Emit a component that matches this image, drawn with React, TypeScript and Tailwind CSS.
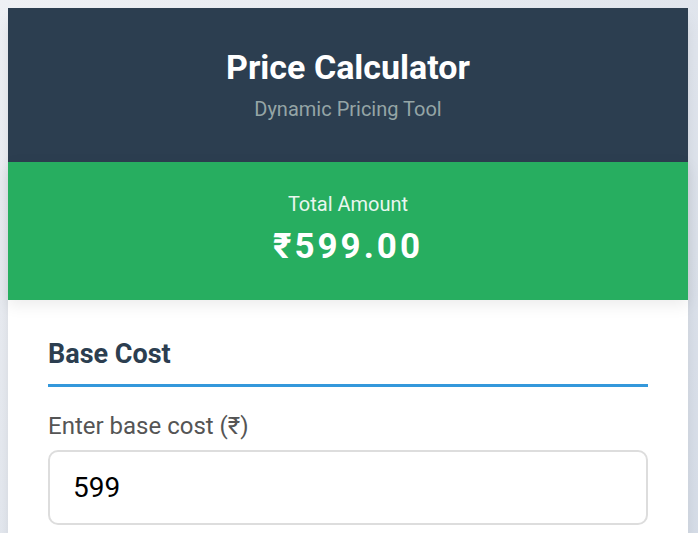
import { useState } from 'react';

export default function App() {
    const [baseCost, setBaseCost] = useState('599');
    const total = (parseFloat(baseCost) || 0).toFixed(2);

    return (
        <div className="min-h-screen bg-[linear-gradient(135deg,#eef0f4_0%,#d0d8e4_100%)] pt-2 pl-2 pr-[10px] pb-2 font-['Roboto','Liberation_Sans',sans-serif]">
            <div className="bg-white shadow-lg">
                {/* Header */}
                <div className="bg-[#2c3e50] px-10 pt-10 pb-[39px] text-center">
                    <h1 className="text-[34px] leading-[38px] font-bold text-white">Price Calculator</h1>
                    <p className="mt-[10px] text-[20px] leading-[27px] text-[#95a5a6]">Dynamic Pricing Tool</p>
                </div>

                {/* Total */}
                <div className="relative z-10 bg-[#27ae60] pt-[30px] pb-[31px] text-center text-white shadow-[0_5px_15px_rgba(0,0,0,0.08)]">
                    <div className="text-[20px] leading-[24px] opacity-90">Total Amount</div>
                    <div className="mt-[9px] text-[35px] leading-[44px] font-bold tracking-[3px]">₹{total}</div>
                </div>

                {/* Content */}
                <div className="px-10 pt-10 pb-10">
                    <section>
                        <h2 className="border-b-[3px] border-[#3498db] pb-[15px] text-[27px] leading-[29px] font-bold text-[#2c3e50]">
                            Base Cost
                        </h2>
                        <label className="mt-[26px] block text-[24px] leading-[26px] text-[#555]">Enter base cost (₹)</label>
                        <input
                            type="number"
                            value={baseCost}
                            onChange={e => setBaseCost(e.target.value)}
                            className="mt-[11px] block w-full rounded-[10px] border-2 border-[#ddd] px-[23px] py-[20px] text-[28px] leading-[31px] text-black outline-none"
                        />
                    </section>

                    <section className="mt-10">
                        <h2 className="border-b-[3px] border-[#3498db] pb-[15px] text-[27px] leading-[29px] font-bold text-[#2c3e50]">
                            Adjustments
                        </h2>
                        <label className="mt-[26px] block text-[24px] leading-[26px] text-[#555]">Discount (%)</label>
                        <input
                            type="number"
                            defaultValue="0"
                            className="mt-[11px] block w-full rounded-[10px] border-2 border-[#ddd] px-[23px] py-[20px] text-[28px] leading-[31px] text-black outline-none"
                        />
                    </section>
                </div>
            </div>
        </div>
    );
}
